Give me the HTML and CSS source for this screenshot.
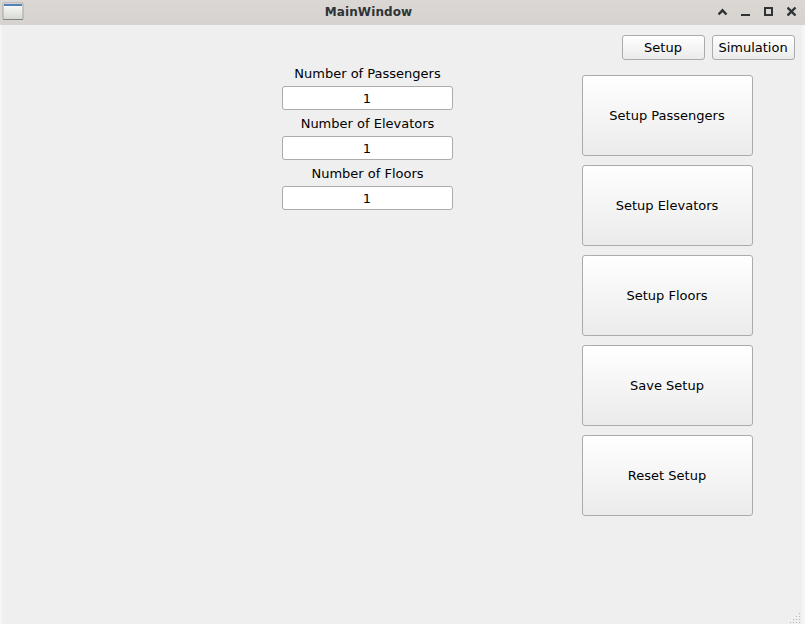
FILE: index.html
```html
<!DOCTYPE html>
<html lang="en">
<head>
<meta charset="utf-8">
<title>MainWindow</title>
<link rel="stylesheet" href="styles.css">
</head>
<body>
<div class="window">
  <header class="titlebar">
    <svg class="app-icon" width="22" height="19" viewBox="0 0 22 19">
      <defs><linearGradient id="pane" x1="0" y1="0" x2="0" y2="1"><stop offset="0" stop-color="#fff"/><stop offset="1" stop-color="#d5d8d0"/></linearGradient></defs>
      <rect x="1" y="1" width="20" height="16.500" rx="1" fill="url(#pane)" stroke="#a5a5a3"/>
      <path d="M1 17.500h20" stroke="#82827f"/>
      <path d="M2 3h18" stroke="#5580b8" stroke-width="2"/>
    </svg>
    <h1 class="title">MainWindow</h1>
    <div class="controls">
      <svg width="10" height="10" viewBox="0 0 10 10"><path d="M.5 8.500 4.500 4.400 8.500 8.500" stroke-width="2.500"/></svg>
      <svg width="10" height="10" viewBox="0 0 10 10"><path d="M0 9h9"/></svg>
      <svg width="10" height="10" viewBox="0 0 10 10"><path d="M1 2h7v7H1z"/></svg>
      <svg width="10" height="10" viewBox="0 0 10 10"><path d="m.5 1.500 8 8M8.500 1.500l-8 8" stroke-width="2.400"/></svg>
    </div>
  </header>
  <main class="client">
    <nav class="tabs">
      <button class="btn">Setup</button>
      <button class="btn">Simulation</button>
    </nav>
    <div class="content">
      <form class="fields">
        <label class="field">Number of Passengers<input value="1"></label>
        <label class="field">Number of Elevators<input value="1"></label>
        <label class="field">Number of Floors<input value="1"></label>
      </form>
      <div class="actions">
        <button class="btn">Setup Passengers</button>
        <button class="btn">Setup Elevators</button>
        <button class="btn">Setup Floors</button>
        <button class="btn">Save Setup</button>
        <button class="btn">Reset Setup</button>
      </div>
    </div>
    <svg class="grip" width="11" height="11" viewBox="0 0 11 11"><path d="M9 0h1v1H9zM6 3h1v1H6zM9 3h1v1H9zM3 6h1v1H3zM6 6h1v1H6zM9 6h1v1H9zM0 9h1v1H0zM3 9h1v1H3zM6 9h1v1H6zM9 9h1v1H9z"/></svg>
  </main>
</div>
</body>
</html>
```
FILE: styles.css
```css
* { box-sizing: border-box; }
body {
  margin: 0;
  font: 13px/16px "DejaVu Sans", sans-serif;
  color: #000;
}
.window {
  width: 805px;
  height: 624px;
  display: flex;
  flex-direction: column;
  overflow: hidden;
}
.titlebar {
  height: 25px;
  flex: none;
  display: grid;
  grid-template-columns: 100px 1fr 100px;
  padding: 0 8px 0 2px;
  background: linear-gradient(#dbd7d4, #d6d2ce);
}
.app-icon { margin-top: 2px; }
.title {
  margin: 4px 0 0 -62px;
  text-align: center;
  font-size: 12px;
  line-height: 16px;
  letter-spacing: 0.1px;
  color: #2e3436;
}
.controls {
  display: flex;
  justify-content: flex-end;
  gap: 13px;
  padding-top: 6px;
}
.controls svg { fill: none; stroke: #2e3436; stroke-width: 2; }
.client {
  position: relative;
  flex: 1;
  border: solid #f6f5f4;
  border-width: 0 3px 0 2px;
  background: #efefef;
}
.tabs {
  display: flex;
  justify-content: flex-end;
  gap: 7px;
  padding: 10px 7px 0 0;
}
.btn {
  font: inherit;
  color: inherit;
  padding: 0 1px 0 0;
  border: 1px solid #ababab;
  border-radius: 3px;
  background: linear-gradient(#fff, #ebebeb);
}
.tabs .btn { width: 83px; height: 25px; }
.content {
  display: flex;
  justify-content: space-between;
  padding: 5px 49px 0 280px;
}
.fields { width: 171px; padding-top: 1px; }
.field {
  display: flex;
  flex-direction: column;
  height: 50px;
  text-align: center;
}
.field input {
  width: 171px;
  height: 24px;
  margin-top: 4px;
  padding: 0 1px 0 0;
  font: inherit;
  color: inherit;
  text-align: center;
  border: 1px solid #ababab;
  border-radius: 3px;
  background: #fff;
}
.actions {
  display: flex;
  flex-direction: column;
  gap: 9px;
  padding-top: 10px;
}
.actions .btn { width: 171px; height: 81px; }
.grip {
  position: absolute;
  right: 1px;
  bottom: 0;
  fill: #b5b5b5;
}
```
